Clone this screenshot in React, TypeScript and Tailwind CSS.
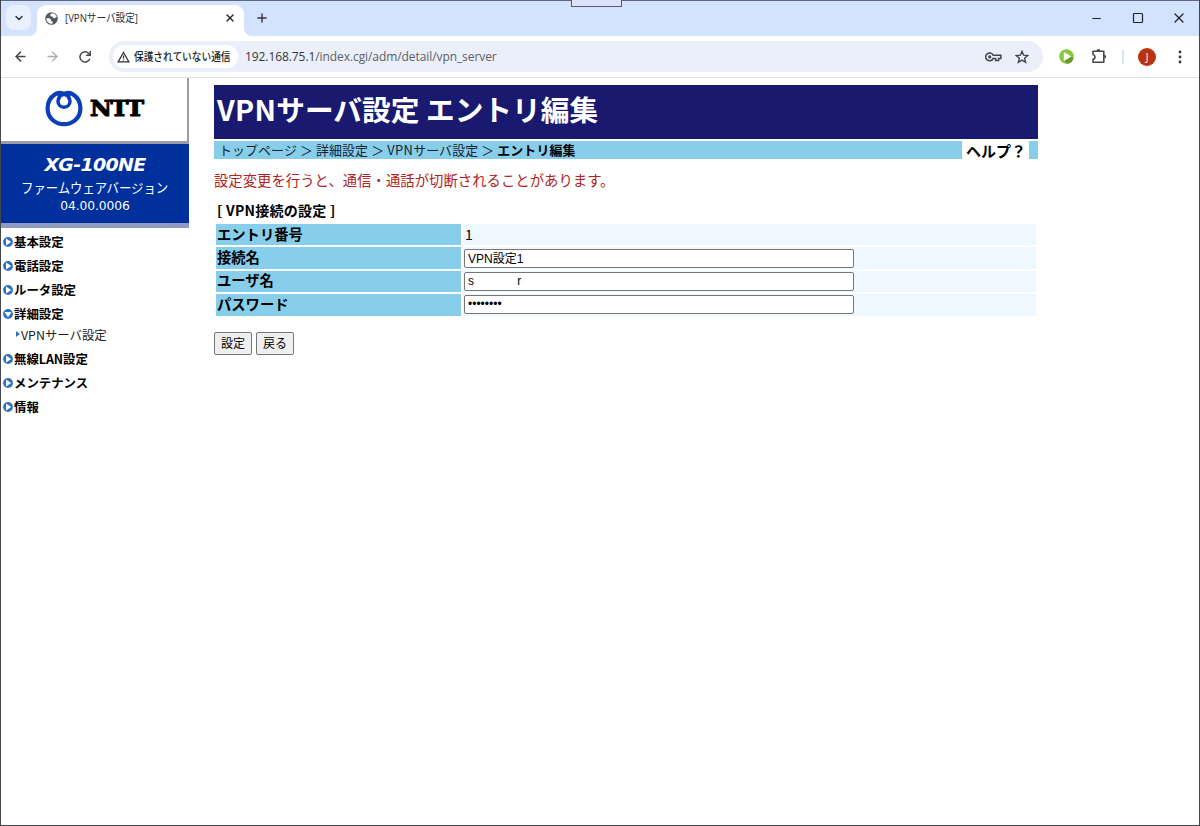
import { ArrowLeft, ArrowRight, ChevronDown, Minus, Plus, Square, X } from 'lucide-react';
import { useState } from "react";

const menu = [
  { label: "基本設定", open: false },
  { label: "電話設定", open: false },
  { label: "ルータ設定", open: false },
  { label: "詳細設定", open: true, child: "VPNサーバ設定" },
  { label: "無線LAN設定", open: false },
  { label: "メンテナンス", open: false },
  { label: "情報", open: false }
];

const fields = [
  { id: "name", label: "接続名", type: "text" },
  { id: "user", label: "ユーザ名", type: "text" },
  { id: "password", label: "パスワード", type: "password" }
];

function Globe() {
  return (
    <svg width="13" height="13" viewBox="0 0 13 13" className="shrink-0">
      <circle cx="6.5" cy="6.5" r="6.3" fill="#54585d" />
      <path d="M7 1.3 5.2 2.6l.3 1.6 2 .3.5 1.4 1.8.4 1.9-1.6A5.3 5.3 0 0 0 7 1.3Z" fill="#fff" />
      <path d="M1.3 6.2h3.2l1.7 1.6-.3 1.4 1.8.4v2a5.2 5.2 0 0 1-6.4-5.4Z" fill="#fff" />
    </svg>
  );
}

function Reload() {
  return (
    <svg width="14" height="14" viewBox="0 0 14 14" fill="none" stroke="#44474b" strokeWidth="1.5">
      <path d="M11.8 8.8A5.1 5.1 0 1 1 10.7 3.4L12 4.8" />
      <path d="M12.2 1v4.2H8.1" />
    </svg>
  );
}

function Warning() {
  return (
    <svg width="13" height="12" viewBox="0 0 14 12" fill="none" stroke="#2b2d30" strokeWidth="1.3" className="shrink-0">
      <path d="M7 1.2 12.8 11.2H1.2Z" />
      <path d="M7 4.5v3.2M7 8.6v1.3" />
    </svg>
  );
}

function KeyIcon() {
  return (
    <svg width="17" height="12" viewBox="0 0 17 12" fill="none" stroke="#44474b" strokeWidth="1.5">
      <path d="M8.1 4.2A3.9 3.9 0 1 0 8.1 7.6H10.6V9.6H13.6V7.6H15.9V4.2Z" />
      <circle cx="4.7" cy="5.9" r="1.6" fill="#44474b" stroke="none" />
    </svg>
  );
}

function StarIcon() {
  return (
    <svg width="14" height="14" viewBox="0 0 14 14" fill="none" stroke="#44474b" strokeWidth="1.4">
      <path d="m7 1.3 1.6 3.9 4.2.3-3.2 2.7 1 4.1L7 10.1l-3.6 2.2 1-4.1L1.2 5.5l4.2-.3Z" />
    </svg>
  );
}

function PlayBadge() {
  return (
    <svg width="15" height="15" viewBox="0 0 15 15">
      <circle cx="7.5" cy="7.5" r="7.3" fill="#8dc63f" />
      <path d="M5.5 11.5 12.3 7.5 14.5 9.5A7.3 7.3 0 0 1 7.5 14.8Z" fill="#659c2b" />
      <path d="M4.8 3 12.3 7.5 4.8 12Z" fill="#fff" />
    </svg>
  );
}

function Puzzle() {
  return (
    <svg width="16" height="16" viewBox="0 0 16 16" fill="none" stroke="#44474b" strokeWidth="1.6">
      <path d="M2 3.2H12.8V14.2H2V11.2C4.6 10.8 4.6 7 2 6.5Z" strokeLinejoin="round" />
      <path d="M5.5 2.9a1.9 1.9 0 0 1 3.8 0ZM13.3 6.8a1.9 1.9 0 0 1 0 3.8Z" fill="#44474b" stroke="none" />
    </svg>
  );
}

function NttMark() {
  return (
    <svg width="38" height="37" viewBox="0 0 38 37" fill="none" stroke="#0b3eb8" className="shrink-0">
      <path d="M19 4.2C15.6 4.8 13 7.6 13 11.2C13 14.8 15.7 17.2 19 17.2S25 14.8 25 11.2C25 7.6 22.4 4.8 19 4.2Z" strokeWidth="3.5" />
      <path d="M19 4.4C16.8 2.2 12.8 2.6 9.8 4.6C5.4 7.4 2.6 12.6 2.6 18.4C2.6 27.4 9.9 34.2 19 34.2S35.4 27.4 35.4 18.4C35.4 12.6 32.6 7.4 28.2 4.6C25.2 2.6 21.2 2.2 19 4.4" strokeWidth="4.2" />
      <path d="M14.2 4.5v5M23.8 4.5v5" strokeWidth="3" />
    </svg>
  );
}

function Bullet({ open }: { open: boolean }) {
  return (
    <svg width="10" height="10" viewBox="0 0 10 10" className="shrink-0">
      <circle cx="5" cy="5" r="4.9" fill="#2d72bd" />
      <path d={open ? "M1.5 3h7L5 8.2Z" : "M3 1.5 8.2 5 3 8.5Z"} fill="#fff" />
    </svg>
  );
}

function BrowserChrome() {
  return (
    <header className="font-['Open_Sans','Noto_Sans_CJK_JP',sans-serif]">
      {/* Tab strip */}
      <div className="relative flex h-9 border-t border-[#62667c] bg-[#d3e2fd]">
        <div className="absolute -top-px left-[570px] h-[7px] w-[51px] border border-t-0 border-[#565d70] bg-[#dbe3f8]" />
        <button className="mt-1 ml-[5px] flex size-[25px] items-center justify-center rounded-lg bg-[#e9f0fe]">
          <ChevronDown size={12} strokeWidth={2.8} color="#25282c" />
        </button>
        <div className="relative mt-1 ml-[6px] flex h-[31px] w-[207px] items-center rounded-t-[9px] bg-white pr-[8px] pb-[5px] pl-[8px]">
          <svg width="8" height="8" viewBox="0 0 8 8" className="absolute bottom-0 -left-2"><path d="M8 0v8H0a8 8 0 0 0 8-8Z" fill="#fff" /></svg>
          <svg width="8" height="8" viewBox="0 0 8 8" className="absolute -right-2 bottom-0"><path d="M0 0v8h8a8 8 0 0 1-8-8Z" fill="#fff" /></svg>
          <Globe />
          <span className="ml-[7px] origin-left scale-x-[0.835] text-[11.5px] leading-none whitespace-nowrap text-[#2b2d30]">[VPNサーバ設定]</span>
          <X size={12} strokeWidth={2.8} color="#25282c" className="ml-auto" />
        </div>
        <Plus size={14} strokeWidth={2.4} color="#34373b" className="mt-[10px] ml-[11px]" />
        <div className="mt-[11px] mr-[12px] ml-auto flex h-3 items-center text-[#202226]">
          <Minus size={13} strokeWidth={2} />
          <Square size={12} strokeWidth={2.4} className="ml-[29px]" />
          <X size={16} strokeWidth={1.8} className="ml-[27px]" />
        </div>
      </div>
      {/* Toolbar */}
      <div className="flex h-[42px] items-center border-b border-[#dfe1e5] bg-white">
        <ArrowLeft size={15} strokeWidth={2.4} color="#44474b" className="ml-3" />
        <ArrowRight size={15} strokeWidth={2.2} color="#aaadb1" className="ml-[17px]" />
        <div className="ml-[18px]"><Reload /></div>
        <div className="ml-[17px] flex h-[31px] w-[934px] items-center rounded-full bg-[#ebeffa] pr-[14px] pl-1">
          <div className="flex h-[23px] w-[125px] items-center rounded-full bg-white pl-1">
            <Warning />
            <span className="ml-1 origin-left scale-x-[0.88] text-[11px] leading-none font-medium whitespace-nowrap text-[#202226]">保護されていない通信</span>
          </div>
          <span className="ml-[7px] text-[12px] leading-none tracking-[-0.08px] text-[#5b5f66]">
            <span className="text-[#34373c]">192.168.75.1</span>/index.cgi/adm/detail/vpn_server
          </span>
          <div className="ml-auto"><KeyIcon /></div>
          <div className="ml-[13px]"><StarIcon /></div>
        </div>
        <div className="ml-4"><PlayBadge /></div>
        <div className="mb-[2px] ml-[17px]"><Puzzle /></div>
        <div className="ml-[15px] h-[14px] w-[2px] bg-[#d9e2fb]" />
        <div className="ml-[14px] flex size-[18px] items-center justify-center rounded-full bg-[#ba320e] text-[10px] leading-none text-white">J</div>
        <svg width="4" height="14" viewBox="0 0 4 14" fill="#34373b" className="ml-[22px]">
          <circle cx="2" cy="2" r="1.4" /><circle cx="2" cy="7" r="1.4" /><circle cx="2" cy="12" r="1.4" />
        </svg>
      </div>
    </header>
  );
}

function Sidebar() {
  return (
    <aside className="w-[188px] shrink-0">
      <div className="flex h-[66px] border-r-2 border-b-[3px] border-[#9b9da2] bg-white pt-[12px] pl-[44px]">
        <NttMark />
        <span className="ml-[7px] origin-left scale-x-[1.04] font-['DejaVu_Serif',serif] text-[23px] leading-9 font-black tracking-[-1.2px] text-black [-webkit-text-stroke:1.1px_black]">NTT</span>
      </div>
      <div className="flex h-[84px] flex-col items-center border-b-[5px] border-[#8e9ac0] bg-[#00309c] pt-[11px] text-white">
        <h2 className="origin-center scale-x-[1.1] font-['DejaVu_Sans',sans-serif] text-[17.3px] leading-5 font-bold tracking-[-0.65px] italic">XG-100NE</h2>
        <p className="mt-[3px] scale-x-[0.935] text-[13.3px] leading-5 tracking-[-0.1px] whitespace-nowrap">ファームウェアバージョン</p>
        <p className="font-['DejaVu_Sans',sans-serif] text-[12.3px] leading-4 tracking-[-0.1px]">04.00.0006</p>
      </div>
      <nav className="pt-[3px] pl-[2px]">
        {menu.map((item) => (
          <div key={item.label}>
            <div className="flex h-[23.9px] items-center gap-px pb-px text-[12.4px] leading-none font-bold text-black">
              <Bullet open={item.open} />
              {item.label}
            </div>
            {item.child && (
              <div className="flex h-[21px] items-center gap-[1px] pb-1 pl-[13px] text-[12.4px] leading-none text-[#202020]">
                <svg width="4" height="6" viewBox="0 0 4 6" className="mb-[3px]"><path d="M0 0 4 3 0 6Z" fill="#2d72bd" /></svg>
                {item.child}
              </div>
            )}
          </div>
        ))}
      </nav>
    </aside>
  );
}

export default function App() {
  const [values, setValues] = useState<Record<string, string>>({
    name: "VPN設定1",
    user: "s             r",
    password: "password"
  });

  return (
    <div className="h-[826px] w-[1200px] overflow-hidden border-r border-b border-l border-[#45474d] bg-white font-['Noto_Sans_CJK_JP',sans-serif]">
      <BrowserChrome />
      <div className="flex">
        <Sidebar />
        <main className="mt-[7px] ml-[25px] w-[824px]">
          <h1 className="flex h-[54px] items-center bg-[#191970] pb-[5px] pl-[3px] text-[28.7px] leading-none font-bold text-white">
            <span className="tracking-[0.3px]">VPN</span>サーバ設定 エントリ編集
          </h1>
          <div className="mt-[2px] flex h-[18px] bg-[#87ceeb]">
            <div className="flex items-center pl-[5px] text-[12.9px] leading-none tracking-[0.14px] whitespace-pre text-[#17222b]">
              トップページ ＞ 詳細設定 ＞ <span className="tracking-[0.35px]">VPN</span>サーバ設定 ＞ <b className="text-black">エントリ編集</b>
            </div>
            <a className="mr-[9px] ml-auto flex h-[19px] w-[67px] items-center justify-center bg-white pl-px text-[15px] leading-none font-bold text-black">ヘルプ？</a>
          </div>
          <p className="mt-[11px] text-[14.35px] leading-5 tracking-[0.03px] text-[#b22222]">設定変更を行うと、通信・通話が切断されることがあります。</p>
          <h3 className="mt-[10px] pl-[3px] text-[14px] leading-5 font-bold tracking-[0.25px] text-black">[ VPN接続の設定 ]</h3>
          <div className="mt-[4px] ml-[2px] flex w-[820px] flex-col gap-[2px]">
            <div className="flex h-[21.4px] gap-[2px]">
              <div className="flex w-[245px] items-center bg-[#87ceeb] pb-[2px] pl-px text-[14.3px] leading-none font-bold text-black">エントリ番号</div>
              <div className="flex flex-1 items-center bg-[#f0f8ff] pb-[2px] pl-[2px] text-[14px] leading-none text-black">1</div>
            </div>
            {fields.map((field) => (
              <div key={field.id} className="flex h-[21.4px] gap-[2px]">
                <label htmlFor={field.id} className="flex w-[245px] items-center bg-[#87ceeb] pb-[2px] pl-px text-[14.3px] leading-none font-bold text-black">
                  {field.label}
                </label>
                <div className="flex flex-1 items-center bg-[#f0f8ff] pl-px">
                  <input
                    id={field.id}
                    type={field.type}
                    value={values[field.id]}
                    onChange={(e) => setValues({ ...values, [field.id]: e.target.value })}
                    className="h-[19px] w-[390px] rounded-[2px] border border-[#767676] bg-white px-[3px] pb-px font-['Liberation_Sans','Noto_Sans_CJK_JP',sans-serif] text-[12px] leading-none text-black"
                  />
                </div>
              </div>
            ))}
          </div>
          <div className="mt-4 flex gap-1">
            <button className="h-[23px] w-[38px] rounded-[2px] border border-[#767676] bg-[#efefef] text-[12px] leading-none text-black">設定</button>
            <button className="h-[23px] w-[38px] rounded-[2px] border border-[#767676] bg-[#efefef] text-[12px] leading-none text-black">戻る</button>
          </div>
        </main>
      </div>
    </div>
  );
}
